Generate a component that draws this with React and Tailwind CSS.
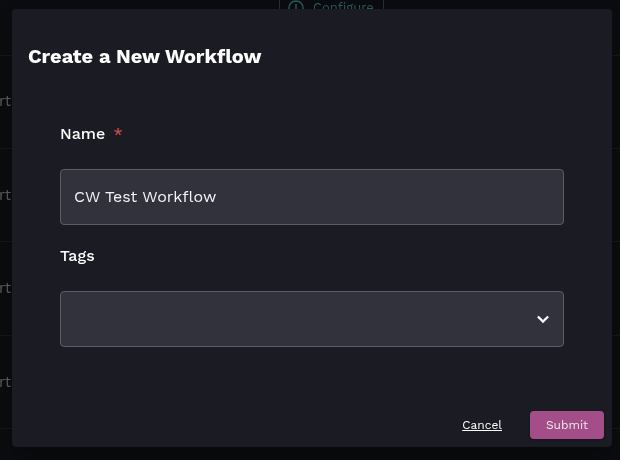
import React from "react";

const rows = ["h-[93px] pb-[2px]", "h-[93px]", "h-[94px] pb-[2px]", "h-[93px]"];

function Backdrop() {
  return (
    <div className="flex h-full flex-col text-[#606062] opacity-99 will-change-transform">
      <div className="flex h-[56px] shrink-0 items-start border-b border-[#18191b] pl-[279px]">
        <div className="-mt-[10px] flex h-9 w-[105px] items-center gap-[9px] border border-[#253236] pl-2 text-[13px] tracking-[0px] text-[#2b5a5e]">
          <svg className="h-4 w-4 shrink-0" viewBox="0 0 16 16" fill="none" stroke="currentColor" strokeWidth="1.5">
            <circle cx="8" cy="8" r="7" />
            <path d="M8 4v5" />
          </svg>
          <span>Configure</span>
        </div>
      </div>
      {rows.map((size, i) => (
        <div key={i} className={`${size} flex shrink-0 items-center border-b border-[#18191b]`}>
          <span className="-ml-px text-[15px] leading-5">rt</span>
        </div>
      ))}
    </div>
  );
}

export default function App() {
  return (
    <div className="relative h-[460px] w-[620px] overflow-hidden bg-[#0b0c0f] font-['Work_Sans','Inter',sans-serif]">
      <Backdrop />
      <div className="absolute inset-0 pt-[9px] pr-2 pb-[13px] pl-3 will-change-transform">
        <section className="flex h-full flex-col rounded-[4px] bg-[#1b1b24] text-white shadow-[0_11px_15px_-7px_rgba(0,0,0,0.2),0_24px_38px_3px_rgba(0,0,0,0.14)]">
          <h2 className="px-4 pt-[31px] text-[20px] leading-[32px] font-bold">
            Create a New Workflow
          </h2>
          <form className="flex flex-col px-12 pt-[50px]">
            <label className="text-[16px] leading-6 font-medium">
              Name <span className="ml-[3px] text-[#d9504a]">*</span>
            </label>
            <div className="mt-[23px] flex h-[56px] items-center rounded-[4px] border border-[#5c5b66] bg-[#32323d] px-[13px] text-[16px] text-[#f4f4f5]">
              CW Test Workflow
            </div>
            <label className="mt-[19px] text-[16px] leading-6 font-medium">Tags</label>
            <div className="mt-[23px] flex h-[56px] items-center justify-end rounded-[4px] border border-[#5c5b66] bg-[#32323d] pr-[13px]">
              <svg className="h-[9px] w-[14px]" viewBox="0 0 14 9" fill="none" stroke="white" strokeWidth="2.3">
                <path d="M1.9 1.5 7 6.6l5.100-5.100" />
              </svg>
            </div>
          </form>
          <footer className="mt-auto flex items-center justify-end gap-7 p-2 text-[12px] leading-4">
            <button className="underline underline-offset-1">Cancel</button>
            <button className="h-7 w-[74px] rounded-[4px] bg-[#a34e88] text-[#f3e5ef] shadow-[0_1px_3px_rgba(0,0,0,0.3)]">Submit</button>
          </footer>
        </section>
      </div>
    </div>
  );
}
